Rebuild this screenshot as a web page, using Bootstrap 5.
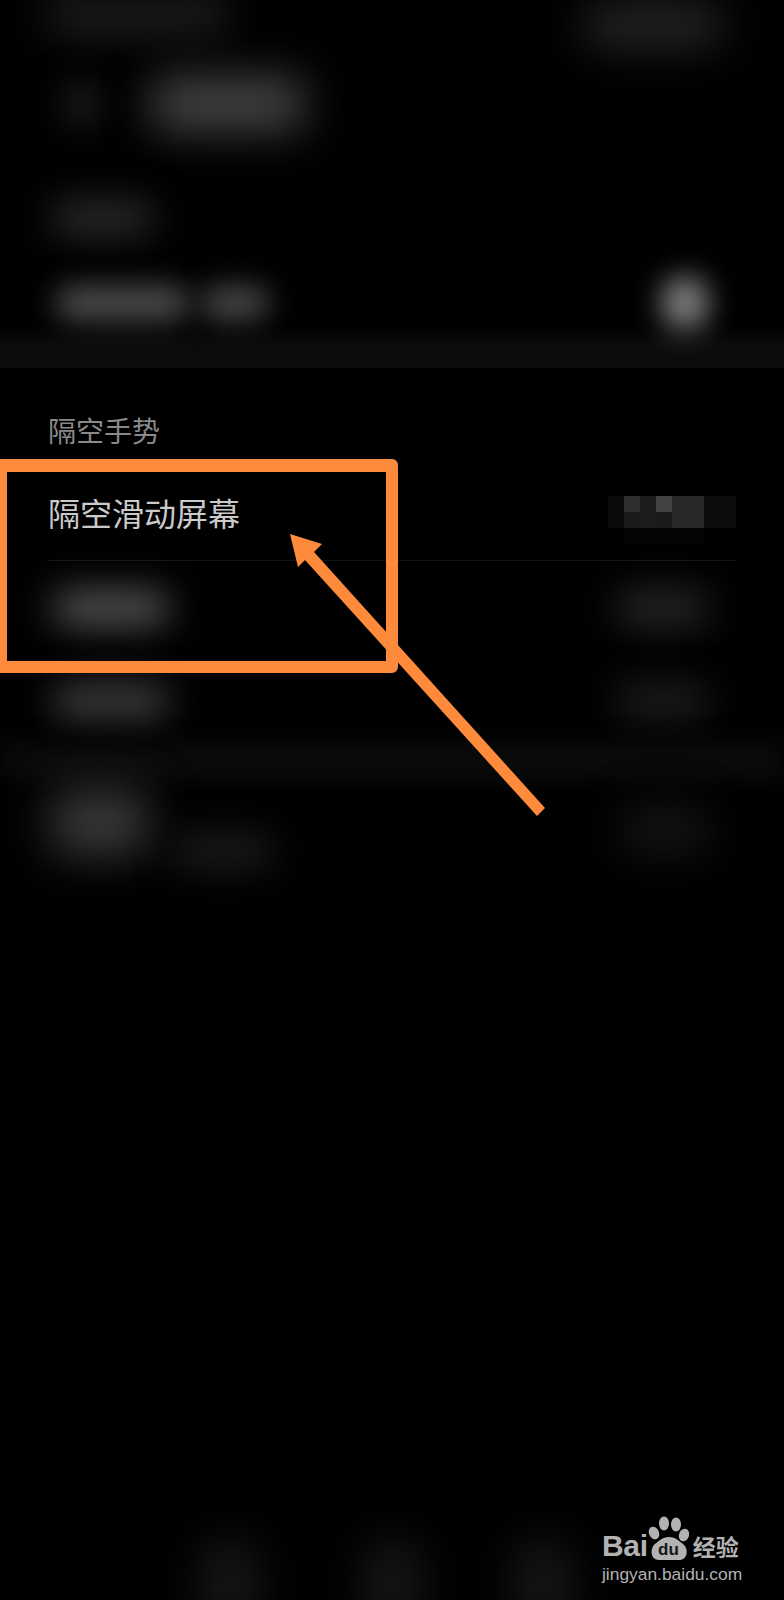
<!DOCTYPE html>
<html lang="zh-CN">
<head>
<meta charset="utf-8">
<title>隔空手势</title>
<link href="https://cdn.jsdelivr.net/npm/bootstrap@5.3.0/dist/css/bootstrap.min.css" rel="stylesheet">
<style>
html,body{background:#000;margin:0}
.shot{width:784px;height:1600px;background:#000;overflow:hidden;font-family:"Noto Sans CJK SC","Liberation Sans",sans-serif}
.rw{padding-left:48px;padding-right:48px}
.r1{height:54px}.r2{height:100px}.r3{height:128px}.r4{height:42px}
.band1{height:44px;background:linear-gradient(#000,#0c0c0c 22px)}
.sect{height:96px;padding-top:44px}
.sect-title{font-size:28px;line-height:36px;color:#8a8a8a}
.itm{height:96px}
.itm-title{font-size:32px;line-height:40px;color:#cacaca}
.rule{height:1px;background:#151515;margin:0 48px}
.r6{height:93px}.r7{height:93px}
.bm{display:block;flex:none;border-radius:18px}
.b-tl{width:185px;height:44px;margin-left:-3px;margin-top:-7px;background:#1c1c1c;filter:blur(20px)}
.b-tr{width:140px;height:44px;margin-right:13px;margin-top:3px;background:#262626;filter:blur(22px)}
.b-2a{width:40px;height:50px;margin-left:14px;background:#181818;filter:blur(16px)}
.b-2b{width:155px;height:56px;margin-left:48px;background:#424242;filter:blur(22px)}
.b-3{width:105px;height:36px;margin-left:2px;background:#2a2a2a;filter:blur(18px)}
.b-4a{width:135px;height:36px;margin-left:7px;background:#4a4a4a;filter:blur(14px)}
.b-4b{width:70px;height:36px;margin-left:10px;background:#444;filter:blur(14px)}
.b-tog{width:46px;height:52px;margin-right:28px;background:#7c7c7c;filter:blur(14px)}
.b-li{width:118px;height:36px;margin-left:4px;background:#545454;filter:blur(18px)}
.b-ri{width:95px;height:40px;margin-right:26px;background:#242424;filter:blur(18px)}
.b-li2{width:118px;height:36px;margin-left:4px;background:#3e3e3e;filter:blur(18px)}
.b-ri2{width:95px;height:40px;margin-right:26px;background:#1b1b1b;filter:blur(18px)}
.band2{height:40px;margin-top:-6px;background:#0a0a0a;filter:blur(10px)}
.lastrow{height:100px}
.b-5a{width:100px;height:68px;margin-left:2px;margin-top:7px;background:#363636;filter:blur(22px)}
.b-5b{width:105px;height:36px;margin-left:20px;margin-top:52px;background:#1b1b1b;filter:blur(18px)}
.b-5c{width:90px;height:50px;margin-right:26px;margin-top:24px;background:#131313;filter:blur(20px)}
.mosa{display:grid;grid-template-columns:repeat(8,16px);grid-auto-rows:16px;margin-top:16px;filter:blur(.5px)}
.t0{background:#000}.t1{background:#0a0a0a}.t2{background:#0d0d0d}.t3{background:#1a1a1a}.t4{background:#1d1d1d}.t5{background:#282828}.t6{background:#2e2e2e}.t7{background:#424242}.t8{background:#050505}
.tabs{position:absolute;left:0;right:0;bottom:0;height:60px;padding-left:200px}
.b-nav{width:60px;height:90px;margin-right:103px;background:#151515;filter:blur(20px)}
.b-nav2{width:60px;height:90px;margin-right:90px;background:#151515;filter:blur(20px)}
.marks{position:absolute;left:0;top:0}
.wm{position:absolute;left:602px;top:1516px;width:142px;color:#b2b2b2}
.wm-top{height:45px}
.wm-bai{font-family:"Liberation Sans",sans-serif;font-weight:700;font-size:30px;line-height:30px;letter-spacing:-.3px}
.wm-jy{font-family:"Noto Sans CJK SC",sans-serif;font-weight:700;font-size:23px;line-height:30px;margin-left:4px}
.wm-url{font-family:"Liberation Sans",sans-serif;font-size:17.4px;line-height:20px;margin-top:3px;white-space:nowrap}
</style>
</head>
<body>
<main class="shot position-relative">
  <div class="r1 rw d-flex align-items-start justify-content-between"><span class="bm b-tl"></span><span class="bm b-tr"></span></div>
  <div class="r2 rw d-flex align-items-center"><span class="bm b-2a"></span><span class="bm b-2b"></span></div>
  <div class="r3 rw d-flex align-items-center"><span class="bm b-3"></span></div>
  <div class="r4 rw d-flex align-items-center justify-content-between">
    <div class="d-flex"><span class="bm b-4a"></span><span class="bm b-4b"></span></div>
    <span class="bm b-tog"></span>
  </div>
  <div class="band1"></div>

  <div class="sect rw"><div class="sect-title">隔空手势</div></div>

  <div class="itm rw d-flex align-items-center justify-content-between">
    <div class="itm-title">隔空滑动屏幕</div>
    <div class="mosa">
      <i class="t1"></i><i class="t6"></i><i class="t4"></i><i class="t7"></i><i class="t5"></i><i class="t5"></i><i class="t2"></i><i class="t2"></i>
      <i class="t1"></i><i class="t3"></i><i class="t4"></i><i class="t3"></i><i class="t5"></i><i class="t5"></i><i class="t2"></i><i class="t2"></i>
      <i class="t0"></i><i class="t8"></i><i class="t8"></i><i class="t8"></i><i class="t8"></i><i class="t8"></i><i class="t0"></i><i class="t0"></i>
    </div>
  </div>
  <div class="rule"></div>
  <div class="r6 rw d-flex align-items-center justify-content-between"><span class="bm b-li"></span><span class="bm b-ri"></span></div>
  <div class="r7 rw d-flex align-items-center justify-content-between"><span class="bm b-li2"></span><span class="bm b-ri2"></span></div>
  <div class="band2"></div>
  <div class="lastrow rw d-flex align-items-start justify-content-between">
    <div class="d-flex align-items-start"><span class="bm b-5a"></span><span class="bm b-5b"></span></div>
    <span class="bm b-5c"></span>
  </div>

  <div class="tabs d-flex align-items-start"><span class="bm b-nav"></span><span class="bm b-nav2"></span><span class="bm b-nav"></span></div>

  <svg class="marks" width="784" height="1600" viewBox="0 0 784 1600" aria-hidden="true">
    <path fill="#fd8b3b" fill-rule="evenodd" d="M-10 459H392a6 6 0 0 1 6 6V667a6 6 0 0 1-6 6H-10ZM7 472V661H386V472Z"/>
    <path fill="#fd8b3b" d="M290 534L322 544L314 552L545 808L537 816L305 560L298 567Z"/>
  </svg>

  <div class="wm">
    <div class="wm-top d-flex align-items-end">
      <span class="wm-bai">Bai</span>
      <svg width="41" height="45" viewBox="649 1516 41 45" aria-hidden="true">
        <g fill="#b2b2b2">
          <ellipse cx="655" cy="1533" rx="5" ry="6.5" transform="rotate(-25 655 1533)"/>
          <ellipse cx="665" cy="1523.5" rx="5" ry="7"/>
          <ellipse cx="677" cy="1524.5" rx="5" ry="7"/>
          <ellipse cx="685" cy="1535" rx="5" ry="6.5" transform="rotate(20 685 1535)"/>
          <path d="M670 1537C663 1537 660 1541 656 1544C651 1548 651 1560 660 1560H680C689 1560 690 1549 684 1544C680 1541 677 1537 670 1537Z"/>
        </g>
        <text x="669.5" y="1555" text-anchor="middle" font-family="Liberation Sans, sans-serif" font-weight="700" font-size="17" fill="#161616">du</text>
      </svg>
      <span class="wm-jy">经验</span>
    </div>
    <div class="wm-url">jingyan.baidu.com</div>
  </div>
</main>
<script src="https://cdn.jsdelivr.net/npm/bootstrap@5.3.0/dist/js/bootstrap.bundle.min.js"></script>
</body>
</html>
